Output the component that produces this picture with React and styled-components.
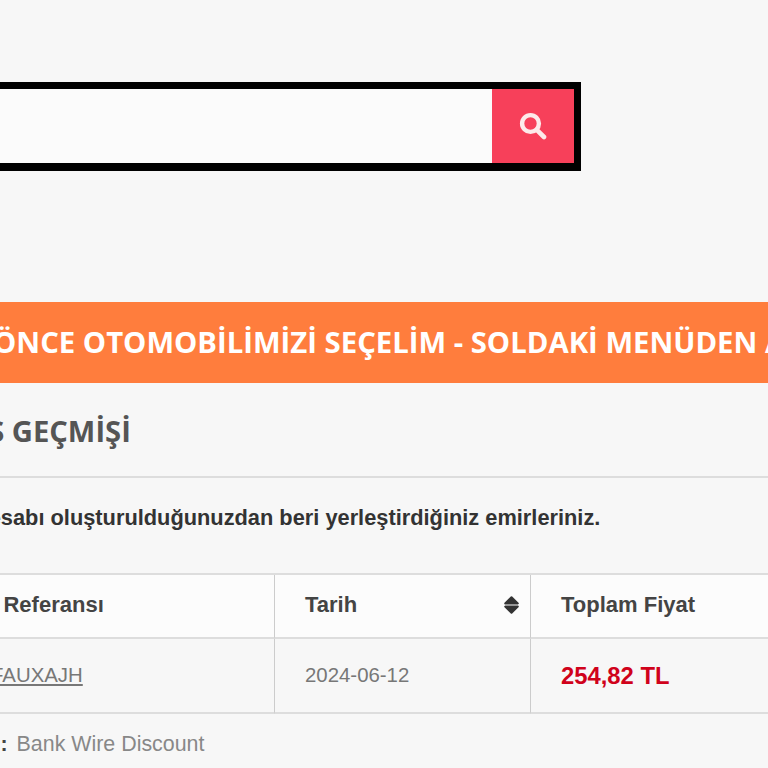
import styled, { createGlobalStyle } from 'styled-components';

const GlobalStyle = createGlobalStyle`
    html, body {
        margin: 0;
        padding: 0;
        height: 768px;
        overflow: hidden;
        background: #f7f7f7;
    }
`;

const Page = styled.div`
    width: 1200px;
    height: 768px;
    margin-left: -105px;
    padding-top: 82px;
    box-sizing: border-box;
    font-family: "Liberation Sans", Arial, sans-serif;
    color: #333;
`;

const SearchForm = styled.form`
    width: 686px;
    height: 89px;
    box-sizing: border-box;
    border: 7px solid #000;
    border-bottom-width: 8px;
    display: flex;
    margin: 0 0 131px;
    background: #fbfbfb;
`;

const SearchInput = styled.div`
    flex: 1;
`;

const SearchButton = styled.button`
    width: 82px;
    border: none;
    padding: 0;
    background: #f7405a;
    display: flex;
    align-items: center;
    justify-content: center;
`;

const SearchGlyph = styled.svg`
    width: 28px;
    height: 28px;
    fill: none;
    stroke: #fdeaea;
`;

const Notice = styled.div`
    height: 81px;
    background: #ff7d3d;
    color: #fff;
    font-family: "Open Sans", sans-serif;
    font-weight: 700;
    font-size: 29.3px;
    line-height: 81px;
    white-space: nowrap;
    padding-left: 98px;
    overflow: hidden;
`;

const Heading = styled.h1`
    margin: 0;
    height: 95px;
    box-sizing: border-box;
    border-bottom: 2px solid #ddd;
    font-family: "Open Sans", sans-serif;
    font-weight: 700;
    font-size: 29.2px;
    line-height: 97px;
    color: #555;
    white-space: nowrap;
`;

const Intro = styled.p`
    margin: 0 0 37px;
    height: 58px;
    padding-left: 78px;
    line-height: 79px;
    font-size: 21.8px;
    font-weight: 700;
    color: #333;
    white-space: nowrap;
`;

const Table = styled.div`
    display: grid;
    grid-template-columns: 380px 256px 1fr;
    border-top: 2px solid #ddd;
`;

const HeadCell = styled.div`
    height: 64px;
    box-sizing: border-box;
    padding: 0 11px 3px 30px;
    background: #fcfcfc;
    border-right: 1px solid #ccc;
    border-bottom: 2px solid #ddd;
    display: flex;
    align-items: center;
    justify-content: space-between;
    font-size: 22px;
    font-weight: 700;
    color: #444;
    white-space: nowrap;
`;

const RefHeadCell = styled(HeadCell)`
    padding-left: 29px;
`;

const Cell = styled.div`
    height: 75px;
    box-sizing: border-box;
    padding: 0 30px;
    border-right: 1px solid #ccc;
    border-bottom: 2px solid #ddd;
    display: flex;
    align-items: center;
    font-size: 20.4px;
    color: #777;
`;

const RefCell = styled(Cell)`
    padding-left: 96px;
`;

const RefLink = styled.a`
    color: #777;
    text-decoration: underline;
`;

const Price = styled.span`
    color: #d0021b;
    font-weight: 700;
    font-size: 23.8px;
`;

const SortIcon = styled.svg`
    width: 15px;
    height: 18px;
    fill: #333;
    stroke: #333;
    stroke-width: 2;
    stroke-linejoin: round;
`;

const Payment = styled.div`
    font-size: 21.4px;
    color: #888;
    padding: 18px 0 0 27px;
    white-space: nowrap;
`;

const PaymentLabel = styled.b`
    color: #444;
    margin-right: 9px;
`;

export default function App() {
    return (
        <>
            <GlobalStyle />
            <Page>
                <SearchForm>
                    <SearchInput />
                    <SearchButton type="button" aria-label="Ara">
                        <SearchGlyph viewBox="0 0 28 28">
                            <circle cx="11.5" cy="11.5" r="8.4" strokeWidth="4.4" />
                            <path d="M17.8 17.8 25 25" strokeWidth="4.6" strokeLinecap="round" />
                        </SearchGlyph>
                    </SearchButton>
                </SearchForm>
                <Notice>ÖNCE OTOMOBİLİMİZİ SEÇELİM - SOLDAKİ MENÜDEN ARAÇ SEÇİN</Notice>
                <Heading>SİPARİŞ GEÇMİŞİ</Heading>
                <Intro>Hesabı oluşturulduğunuzdan beri yerleştirdiğiniz emirleriniz.</Intro>
                <Table>
                    <RefHeadCell>Sipariş Referansı</RefHeadCell>
                    <HeadCell>
                        Tarih
                        <SortIcon viewBox="0 0 15 18">
                            <path d="M7.5 1.2 13.8 7.4H1.2zM7.5 16.8 1.2 10.6h12.6z" />
                        </SortIcon>
                    </HeadCell>
                    <HeadCell>Toplam Fiyat</HeadCell>
                    <RefCell><RefLink href="#">FAUXAJH</RefLink></RefCell>
                    <Cell>2024-06-12</Cell>
                    <Cell><Price>254,82 TL</Price></Cell>
                </Table>
                <Payment><PaymentLabel>Ödeme :</PaymentLabel>Bank Wire Discount</Payment>
            </Page>
        </>
    );
}
